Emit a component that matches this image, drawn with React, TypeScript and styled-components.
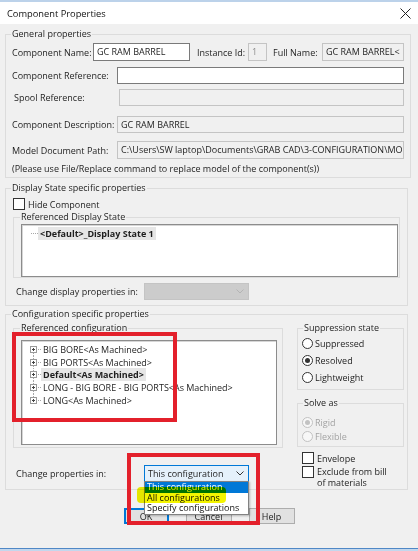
import React from 'react';
import styled, { createGlobalStyle } from 'styled-components';

const GlobalStyle = createGlobalStyle`
  html, body {
    margin: 0;
    padding: 0;
    background: #f0f0f0;
  }
  body {
    font-family: "Open Sans", "Noto Sans", sans-serif;
    font-size: 9px;
    color: #1e1e1e;
  }
  * {
    box-sizing: border-box;
  }
`;

const Window = styled.div`
  position: relative;
  width: 418px;
  height: 551px;
  display: flex;
  flex-direction: column;
  overflow: hidden;
  background: #f0f0f0;
`;

const TopStrip = styled.div`
  flex: none;
  height: 2px;
  background: #bcd2ea;
`;

const TitleBar = styled.div`
  flex: none;
  height: 22px;
  display: flex;
  align-items: center;
  justify-content: space-between;
  padding: 0 7px;
  background: #fff;
  font-size: 9.3px;
  color: #111;
`;

const Body = styled.div`
  flex: 1;
  display: flex;
  flex-direction: column;
  background: #f0f0f0;
`;

const BottomEdge = styled.div`
  flex: none;
  height: 3px;
  border-top: 1px solid #4f88c6;
  background: #c3d7ed;
`;

const Group = styled.fieldset<{ $mt?: number; $mr?: number; $ml?: number; $w?: number }>`
  flex: none;
  min-width: 0;
  width: ${p => (p.$w ? `${p.$w}px` : 'auto')};
  margin: ${p => p.$mt ?? 0}px ${p => p.$mr ?? 0}px 0 ${p => p.$ml ?? 0}px;
  padding: 0;
  border: 1px solid #dcdcdc;
`;

const Legend = styled.legend<{ $indent: number }>`
  margin-left: ${p => p.$indent}px;
  padding: 0 1px;
  height: 12px;
  line-height: 12px;
  white-space: nowrap;
`;

const Inner = styled.div<{ $pad: string }>`
  padding: ${p => p.$pad};
`;

const Row = styled.div<{ $mt?: number }>`
  display: flex;
  align-items: center;
  margin-top: ${p => p.$mt ?? 0}px;
`;

const Label = styled.span<{ $w?: number; $ml?: number }>`
  flex: none;
  width: ${p => (p.$w ? `${p.$w}px` : 'auto')};
  margin-left: ${p => p.$ml ?? 0}px;
  white-space: nowrap;
`;

const Note = styled.div<{ $mt?: number }>`
  margin-top: ${p => p.$mt ?? 0}px;
  height: 12px;
  line-height: 12px;
  white-space: nowrap;
`;

const TextBox = styled.div<{ $w?: number; $h: number; $off?: boolean; $dim?: boolean }>`
  flex: ${p => (p.$w ? 'none' : '1')};
  min-width: 0;
  width: ${p => (p.$w ? `${p.$w}px` : 'auto')};
  height: ${p => p.$h}px;
  line-height: ${p => p.$h - 2}px;
  padding: 0 3px;
  border: 1px solid ${p => (p.$off ? '#c4c4c4' : '#7a7a7a')};
  background: ${p => (p.$off ? '#f0f0f0' : '#fff')};
  color: ${p => (p.$dim ? '#8c8c8c' : '#1e1e1e')};
  white-space: nowrap;
  overflow: hidden;
`;

const CheckBox = styled.span`
  flex: none;
  width: 12px;
  height: 12px;
  margin-right: 3px;
  border: 1px solid #333;
  background: #fff;
`;

const Radio = styled.span<{ $checked?: boolean; $off?: boolean }>`
  flex: none;
  display: flex;
  align-items: center;
  justify-content: center;
  width: 11px;
  height: 11px;
  margin-right: 2px;
  border-radius: 50%;
  border: 1px solid ${p => (p.$off ? '#c2c2c2' : '#333')};
  background: ${p => (p.$off ? '#f7f7f7' : '#fff')};

  &::after {
    content: '';
    display: ${p => (p.$checked ? 'block' : 'none')};
    width: 5px;
    height: 5px;
    border-radius: 50%;
    background: ${p => (p.$off ? '#c2c2c2' : '#333')};
  }
`;

const OptionRow = styled.div<{ $mt?: number; $ml?: number; $off?: boolean; $top?: boolean }>`
  display: flex;
  align-items: ${p => (p.$top ? 'flex-start' : 'center')};
  height: ${p => (p.$top ? 'auto' : '12px')};
  margin-top: ${p => p.$mt ?? 0}px;
  margin-left: ${p => p.$ml ?? 0}px;
  color: ${p => (p.$off ? '#a3a3a3' : '#1e1e1e')};
  line-height: 11px;
  white-space: nowrap;
`;

const ListBox = styled.div<{ $h: number; $pl: number }>`
  height: ${p => p.$h}px;
  padding: 2px 0 0 ${p => p.$pl}px;
  background: #fff;
  border: 1px solid #8c8c8c;
  box-shadow: inset 1px 1px 0 #d6d6d6;
`;

const TreeRow = styled.div<{ $h: number }>`
  display: flex;
  align-items: center;
  height: ${p => p.$h}px;
  white-space: nowrap;

  svg {
    flex: none;
    display: block;
  }
`;

const ItemText = styled.span<{ $selected?: boolean }>`
  padding: 0 2px;
  margin-left: -2px;
  line-height: 13px;
  font-weight: ${p => (p.$selected ? 700 : 400)};
  background: ${p => (p.$selected ? '#e6e6e6' : 'transparent')};
`;

const Combo = styled.div<{ $open?: boolean; $off?: boolean }>`
  flex: none;
  display: flex;
  align-items: center;
  justify-content: space-between;
  width: 105px;
  height: 17px;
  padding: 0 4px 0 3px;
  border: 1px solid ${p => (p.$open ? '#0078d7' : p.$off ? '#c4c4c4' : '#7a7a7a')};
  background: ${p => (p.$open ? '#e5f1fb' : p.$off ? '#cccccc' : '#fff')};
  white-space: nowrap;
`;

const Columns = styled.div`
  display: flex;
  align-items: flex-start;
  gap: 14px;
  padding: 2px 3px 1px 7px;
`;

const Column = styled.div<{ $w: number }>`
  flex: none;
  width: ${p => p.$w}px;
  display: flex;
  flex-direction: column;
`;

const ButtonBar = styled.div`
  display: flex;
  justify-content: center;
  gap: 17px;
  margin-top: 18px;
`;

const Button = styled.div<{ $primary?: boolean }>`
  width: ${p => (p.$primary ? 45 : 46)}px;
  height: 16px;
  display: flex;
  align-items: center;
  justify-content: center;
  background: #e1e1e1;
  border: 1px solid ${p => (p.$primary ? '#0078d7' : '#adadad')};
  box-shadow: ${p => (p.$primary ? 'inset 0 0 0 1px #0078d7' : 'none')};
`;

const DropList = styled.div`
  position: absolute;
  left: 144px;
  top: 481px;
  width: 105px;
  border: 1px solid #828282;
  background: #fff;
  box-shadow: 1px 1px 2px rgba(0, 0, 0, 0.25);
  z-index: 2;
`;

const DropItem = styled.div<{ $active?: boolean }>`
  height: 10.5px;
  line-height: 10.5px;
  padding-left: 2px;
  white-space: nowrap;
  background: ${p => (p.$active ? '#0078d7' : '#fff')};
  color: ${p => (p.$active ? '#fff' : '#111')};
`;

const Highlighter = styled.div`
  position: absolute;
  left: 137px;
  top: 487px;
  width: 89px;
  height: 16px;
  border-radius: 4px;
  background: #f4f400;
  mix-blend-mode: multiply;
  z-index: 3;
`;

const Callout = styled.div<{ $x: number; $y: number; $w: number; $h: number }>`
  position: absolute;
  left: ${p => p.$x}px;
  top: ${p => p.$y}px;
  width: ${p => p.$w}px;
  height: ${p => p.$h}px;
  border: 4px solid #e3202b;
  z-index: 4;
`;

const CloseIcon = () => (
  <svg width="11" height="11" viewBox="0 0 11 11">
    <path d="M0.5 0.5 L10.5 10.5 M10.5 0.5 L0.5 10.5" stroke="#222" strokeWidth="1" fill="none" />
  </svg>
);

const Chevron = ({ color }: { color: string }) => (
  <svg width="8" height="5" viewBox="0 0 8 5">
    <path d="M0.5 0.5 L4 4 L7.5 0.5" stroke={color} strokeWidth="1" fill="none" />
  </svg>
);

const Connector = ({ first, last }: { first?: boolean; last?: boolean }) => (
  <svg width="13" height="13" viewBox="0 0 13 13">
    {!first && <line x1="3.5" y1="0" x2="3.5" y2="3" stroke="#a8a8a8" strokeDasharray="1 1" />}
    {!last && <line x1="3.5" y1="10" x2="3.5" y2="13" stroke="#a8a8a8" strokeDasharray="1 1" />}
    <rect x="0.5" y="3.5" width="6" height="6" fill="#fff" stroke="#9a9a9a" />
    <line x1="2" y1="6.5" x2="5" y2="6.5" stroke="#444" />
    <line x1="3.5" y1="5" x2="3.5" y2="8" stroke="#444" />
    <line x1="8" y1="6.5" x2="12" y2="6.5" stroke="#a8a8a8" strokeDasharray="1 1" />
  </svg>
);

const Leader = () => (
  <svg width="9" height="13" viewBox="0 0 9 13">
    <line x1="0" y1="6.5" x2="9" y2="6.5" stroke="#a8a8a8" strokeDasharray="1 1" />
  </svg>
);

const configs = [
  'BIG BORE<As Machined>',
  'BIG PORTS<As Machined>',
  'Default<As Machined>',
  'LONG - BIG BORE - BIG PORTS<As Machined>',
  'LONG<As Machined>',
];

export default function App() {
  return (
    <>
      <GlobalStyle />
      <Window>
        <TopStrip />
        <TitleBar>
          <span>Component Properties</span>
          <CloseIcon />
        </TitleBar>
        <Body>
          <Group $mt={4} $mr={7} $ml={5}>
            <Legend $indent={5}>General properties</Legend>
            <Inner $pad="3px 6px 2px 6px">
              <Row>
                <Label $w={81}>Component Name:</Label>
                <TextBox $w={97} $h={18}>GC RAM BARREL</TextBox>
                <Label $w={51} $ml={7}>Instance Id:</Label>
                <TextBox $w={19} $h={18} $off $dim>1</TextBox>
                <Label $w={49} $ml={6}>Full Name:</Label>
                <TextBox $h={18} $off>GC RAM BARREL&lt;</TextBox>
              </Row>
              <Row $mt={6}>
                <Label $w={105}>Component Reference:</Label>
                <TextBox $h={17} />
              </Row>
              <Row $mt={5}>
                <Label $w={105} $ml={2}>Spool Reference:</Label>
                <TextBox $h={17} $off />
              </Row>
              <Row $mt={10}>
                <Label $w={105}>Component Description:</Label>
                <TextBox $h={17} $off>GC RAM BARREL</TextBox>
              </Row>
              <Row $mt={8}>
                <Label $w={105}>Model Document Path:</Label>
                <TextBox $h={18} $off>
                  {'C:\\Users\\SW laptop\\Documents\\GRAB CAD\\3-CONFIGURATION\\MOD'}
                </TextBox>
              </Row>
              <Note $mt={4}>(Please use File/Replace command to replace model of the component(s))</Note>
            </Inner>
          </Group>

          <Group $mt={4} $mr={10} $ml={5}>
            <Legend $indent={5}>Display State specific properties</Legend>
            <Inner $pad="4px 7px 5px 7px">
              <OptionRow>
                <CheckBox />
                Hide Component
              </OptionRow>
              <Group $mt={1}>
                <Legend $indent={6}>Referenced Display State</Legend>
                <Inner $pad="1px 1px 0 7px">
                  <ListBox $h={53} $pl={9}>
                    <TreeRow $h={13}>
                      <Leader />
                      <ItemText $selected>&lt;Default&gt;_Display State 1</ItemText>
                    </TreeRow>
                  </ListBox>
                </Inner>
              </Group>
              <Row $mt={5}>
                <Label $w={128} $ml={3}>Change display properties in:</Label>
                <Combo $off>
                  <span />
                  <Chevron color="#b4b4b4" />
                </Combo>
              </Row>
            </Inner>
          </Group>

          <Group $mt={2} $mr={10} $ml={5}>
            <Legend $indent={5}>Configuration specific properties</Legend>
            <Columns>
              <Column $w={270}>
                <Group $w={270}>
                  <Legend $indent={6}>Referenced configuration</Legend>
                  <Inner $pad="6px 5px 2px 7px">
                    <ListBox $h={105} $pl={8}>
                      {configs.map((name, i) => (
                        <TreeRow key={name} $h={12.75}>
                          <Connector first={i === 0} last={i === configs.length - 1} />
                          <ItemText $selected={name.startsWith('Default')}>{name}</ItemText>
                        </TreeRow>
                      ))}
                    </ListBox>
                  </Inner>
                </Group>
                <Row $mt={17}>
                  <Label $w={128} $ml={3}>Change properties in:</Label>
                  <Combo $open>
                    <span>This configuration</span>
                    <Chevron color="#333" />
                  </Combo>
                </Row>
              </Column>

              <Column $w={107}>
                <Group>
                  <Legend $indent={5}>Suppression state</Legend>
                  <Inner $pad="3px 4px 6px 4px">
                    <OptionRow>
                      <Radio />
                      Suppressed
                    </OptionRow>
                    <OptionRow $mt={5}>
                      <Radio $checked />
                      Resolved
                    </OptionRow>
                    <OptionRow $mt={5}>
                      <Radio />
                      Lightweight
                    </OptionRow>
                  </Inner>
                </Group>
                <Group $mt={7}>
                  <Legend $indent={5}>Solve as</Legend>
                  <Inner $pad="7px 4px 4px 4px">
                    <OptionRow $off>
                      <Radio $checked $off />
                      Rigid
                    </OptionRow>
                    <OptionRow $mt={2} $off>
                      <Radio $off />
                      Flexible
                    </OptionRow>
                  </Inner>
                </Group>
                <OptionRow $mt={5} $ml={5}>
                  <CheckBox />
                  Envelope
                </OptionRow>
                <OptionRow $mt={2} $ml={5} $top>
                  <CheckBox />
                  <span>
                    Exclude from bill
                    <br />
                    of materials
                  </span>
                </OptionRow>
              </Column>
            </Columns>
          </Group>

          <ButtonBar>
            <Button $primary>OK</Button>
            <Button>Cancel</Button>
            <Button>Help</Button>
          </ButtonBar>
        </Body>
        <BottomEdge />

        <DropList>
          <DropItem $active>This configuration</DropItem>
          <DropItem>All configurations</DropItem>
          <DropItem>Specify configurations</DropItem>
        </DropList>
        <Highlighter />
        <Callout $x={12} $y={332} $w={165} $h={90} />
        <Callout $x={127} $y={453} $w={133} $h={72} />
      </Window>
    </>
  );
}
